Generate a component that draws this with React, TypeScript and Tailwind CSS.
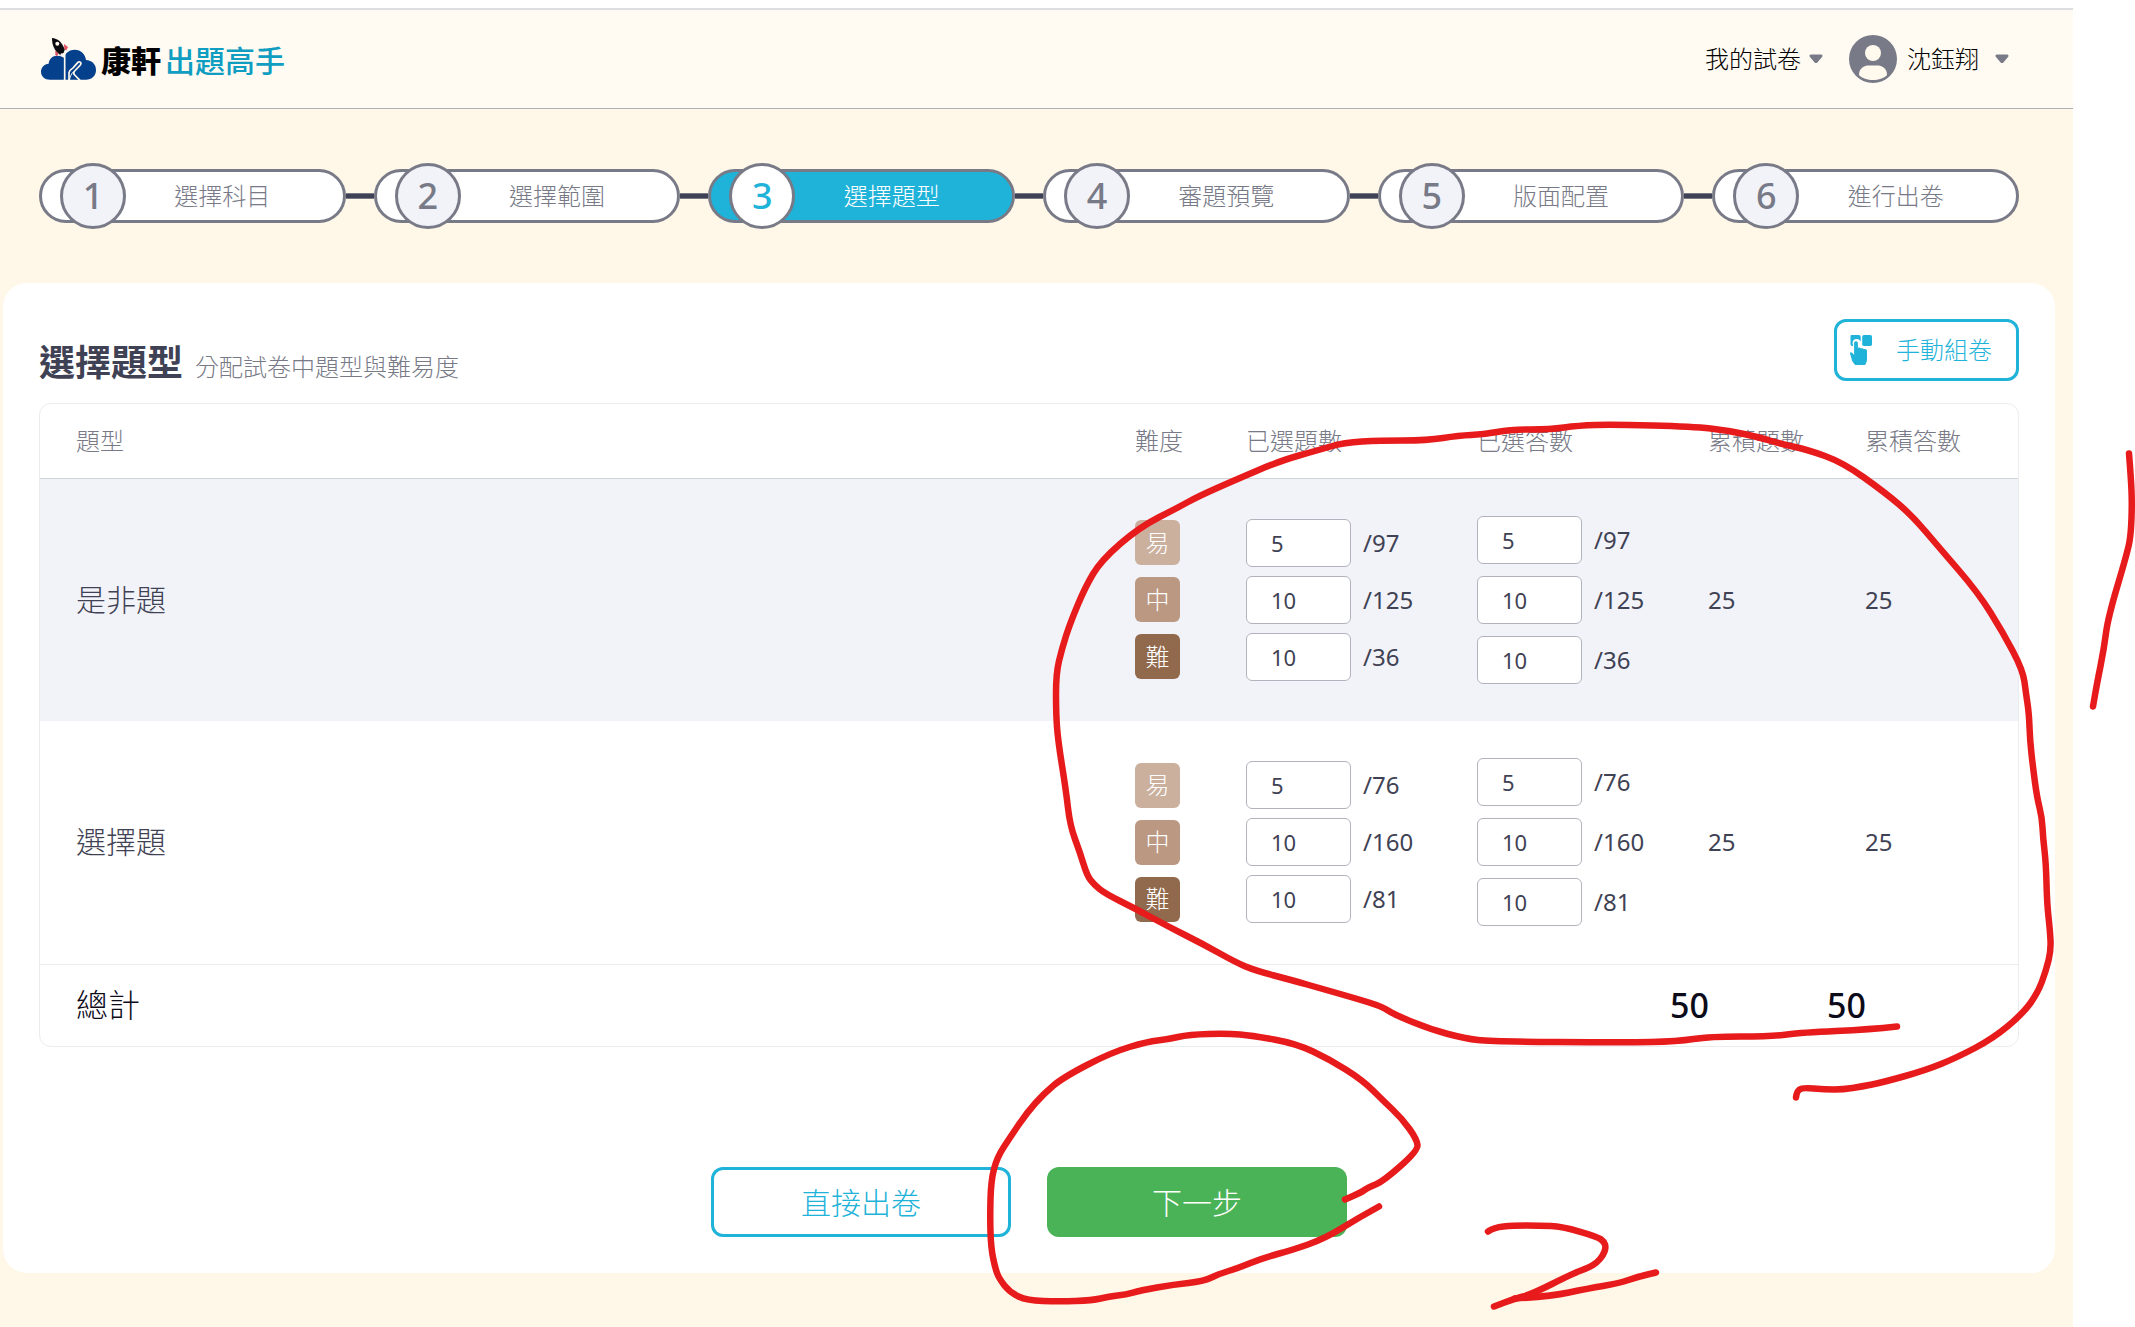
import React, { useState } from "react";

type Level = { label: string; tone: string; chosen: number; total: number };
type QuestionType = { name: string; shaded: boolean; levels: Level[]; questions: number; answers: number };

const EASY = "bg-[#cbb09e]";
const MEDIUM = "bg-[#bb9881]";
const HARD = "bg-[#91694d]";

const STEPS = ["選擇科目", "選擇範圍", "選擇題型", "審題預覽", "版面配置", "進行出卷"];
const CURRENT_STEP = 3;

const ROWS: QuestionType[] = [
  {
    name: "是非題",
    shaded: true,
    levels: [
      { label: "易", tone: EASY, chosen: 5, total: 97 },
      { label: "中", tone: MEDIUM, chosen: 10, total: 125 },
      { label: "難", tone: HARD, chosen: 10, total: 36 },
    ],
    questions: 25,
    answers: 25,
  },
  {
    name: "選擇題",
    shaded: false,
    levels: [
      { label: "易", tone: EASY, chosen: 5, total: 76 },
      { label: "中", tone: MEDIUM, chosen: 10, total: 160 },
      { label: "難", tone: HARD, chosen: 10, total: 81 },
    ],
    questions: 25,
    answers: 25,
  },
];

function LogoMark() {
  return (
    <svg viewBox="30 30 171 132" className="h-11 w-[57px]" aria-hidden="true">
      <path
        d="M60 158 C44 158 33 148 33 134 C33 121 43 111 56 110 C57 96 67 86 82 86 C90 86 96 88 101 92 C107 77 118 68 134 68 C153 68 166 81 168 99 C186 100 198 112 198 129 C198 147 185 158 168 158 Z"
        fill="#04408c"
      />
      <path d="M104 78 V160" stroke="#fff8ec" strokeWidth="5" />
      <path
        d="M117 160 V137 C118 129 124 126 130 122 L143 107 C148 101 156 107 151 114 L134 132 C130 136 130 140 134 144 L150 160"
        fill="none"
        stroke="#fff8ec"
        strokeWidth="5"
      />
      <path d="M118 160 C120 150 123 141 131 134" fill="none" stroke="#fff8ec" strokeWidth="3" />
      <path d="M102 51 L114 60 L109 70 L103 68 Z" fill="#e25262" />
      <path d="M76 70 L86 80 L80 88 L76 84 Z" fill="#e25262" />
      <path d="M66 33 C82 34 97 45 104 68 L101 77 L88 81 C74 72 66 55 66 33 Z" fill="#0c0c10" />
      <circle cx="82" cy="50" r="6" fill="#fff8ec" />
      <path d="M85 70 L90 86 L94 76 L99 80 L98 70 Z" fill="#0c0c10" />
    </svg>
  );
}

function Caret() {
  return (
    <svg viewBox="0 0 14 10" className="h-[10px] w-[14px]" aria-hidden="true">
      <path d="M2 0.5 H12 C13.6 0.5 14 2 13 3 L8.4 8.4 C7.6 9.3 6.4 9.3 5.6 8.4 L1 3 C0 2 0.4 0.5 2 0.5 Z" fill="#787a87" />
    </svg>
  );
}

function Avatar() {
  return (
    <svg viewBox="0 0 48 48" className="size-12" aria-hidden="true">
      <circle cx="24" cy="24" r="24" fill="#787a87" />
      <circle cx="24" cy="18" r="8" fill="#fff9ee" />
      <path d="M10 40 C10 33 15 30.500 20 30.500 H28 C33 30.500 38 33 38 40 C35 43.500 29.500 45 24 45 C18.500 45 13 43.500 10 40 Z" fill="#fff9ee" />
    </svg>
  );
}

function TapIcon() {
  return (
    <svg viewBox="0 0 22 30" className="h-[30px] w-[22px]" aria-hidden="true" fill="#1fb3d9">
      <path d="M1.500 0 H9 Q10.700 0 10.700 1.700 V6.500 C9.500 4.300 7.500 3.800 6 3.900 C3.500 4.200 2.400 6 2.600 8.500 L3.200 11 H2.200 Q0.500 11 0.500 9.300 V1.200 Q0.500 0 1.500 0 Z" />
      <rect x="12.200" y="0" width="9.800" height="11" rx="1.800" />
      <path d="M6 6.200 C7.200 6.200 7.900 7 7.900 8.200 V13 C9 12.200 10.400 12.600 10.900 13.600 C12 13 13.300 13.300 13.800 14.200 C15.600 13.600 17 14.500 17 16 V24 C17 27 15.800 28.200 15.200 30 H5 C4.500 28.500 3 28 2 25.500 L0.300 19.500 C-0.300 17.800 0.200 17 1 17.200 C2.500 17.500 3.400 19 4.100 20 V8.200 C4.100 7 4.800 6.200 6 6.200 Z" />
    </svg>
  );
}

function Step({ index, label }: { index: number; label: string }) {
  const active = index === CURRENT_STEP;
  return (
    <li
      aria-current={active ? "step" : undefined}
      className={
        "flex h-[54px] flex-1 items-center rounded-full border-3 border-[#787a87] pl-[18px] " +
        (active ? "bg-[#1fb3d9]" : "bg-white")
      }
    >
      <span
        className={
          "flex size-[66px] shrink-0 items-center justify-center rounded-full border-3 border-[#787a87] text-[36px] leading-none font-medium " +
          (active ? "bg-white text-[#1fb3d9]" : "bg-[#f2f3f8] text-[#787a87]")
        }
      >
        {index}
      </span>
      <span className={"flex-1 pr-6 text-center text-2xl font-light " + (active ? "text-white" : "text-[#787a87]")}>{label}</span>
    </li>
  );
}

function CountField({ name, level }: { name: string; level: Level }) {
  const [value, setValue] = useState(String(level.chosen));
  return (
    <label className="flex items-center gap-3 text-2xl">
      <input
        type="text"
        inputMode="numeric"
        aria-label={name}
        value={value}
        onChange={(e) => setValue(e.target.value)}
        className="h-12 w-[105px] rounded-md border border-[#b3b3bf] bg-white px-6 text-[22px] text-[#3f4254]"
      />
      <span>/{level.total}</span>
    </label>
  );
}

const PEN_STROKES = [
  "1897,1026 1870,1029 1802,1032 1772,1036 1710,1036 1677,1041 1625,1042 1491,1041 1465,1038 1431,1029 1394,1014 1382,1006 1356,998 1321,988 1293,980 1255,970 1236,962 1202,943 1170,927 1135,908 1105,893 1094,884 1087,875 1080,852 1070,825 1066,790 1058,740 1056,713 1056,673 1062,648 1070,623 1085,587 1101,560 1139,527 1178,507 1198,496 1234,480 1281,460 1317,450 1344,442 1380,440 1427,440 1459,435 1483,434 1511,429 1550,429 1578,425 1613,424 1693,426 1728,430 1760,437 1783,444 1807,449 1843,462 1885,492 1912,515 1940,548 1978,592 2003,632 2023,670 2026,693 2029,713 2030,740 2033,767 2037,797 2042,817 2043,837 2046,863 2047,903 2050,930 2051,950 2046,970 2038,992 2023,1013 1993,1038 1957,1057 1925,1070 1882,1082 1862,1086 1843,1089 1825,1089 1802,1087 1797,1091 1796,1097",
  "1379,1206 1359,1217 1325,1238 1291,1250 1264,1257 1237,1268 1220,1273 1203,1281 1174,1284 1140,1290 1126,1294 1109,1296 1092,1300 1059,1301 1027,1300 1010,1292 999,1278 995,1267 991,1247 990,1217 991,1180 997,1157 1010,1137 1027,1112 1044,1093 1063,1077 1111,1052 1148,1041 1167,1039 1189,1034 1228,1033 1252,1035 1296,1043 1330,1059 1363,1080 1383,1100 1402,1118 1417,1139 1418,1150 1383,1181 1368,1187 1361,1192 1345,1199",
  "2129,453 2131,478 2132,503 2131,532 2128,550 2108,617 2104,648 2097,683 2093,706",
  "1488,1231 1494,1227 1513,1225 1540,1225 1562,1226 1597,1236 1604,1241 1606,1247 1603,1255 1597,1262 1589,1267 1573,1273 1531,1294 1515,1298 1494,1306",
  "1515,1298 1550,1296 1588,1288 1618,1283 1639,1276 1656,1272",
];

/* Turns a list of pen positions into a curve running through the segment midpoints. */
function smooth(stroke: string) {
  const pts = stroke.split(" ").map((p) => p.split(",").map(Number));
  let d = `M${pts[0][0]} ${pts[0][1]}`;
  for (let i = 1; i < pts.length - 1; i++) {
    const [x, y] = pts[i];
    const [nx, ny] = pts[i + 1];
    d += ` Q${x} ${y} ${(x + nx) / 2} ${(y + ny) / 2}`;
  }
  const [lx, ly] = pts[pts.length - 1];
  return `${d} L${lx} ${ly}`;
}

function PenMarks() {
  return (
    <svg
      viewBox="0 0 2135 1327"
      className="pointer-events-none absolute inset-0 h-full w-full"
      fill="none"
      stroke="#e71b1b"
      strokeWidth="6.5"
      strokeLinecap="round"
      strokeLinejoin="round"
      aria-hidden="true"
    >
      {PEN_STROKES.map((s) => (
        <path key={s} d={smooth(s)} />
      ))}
    </svg>
  );
}

export default function App() {
  return (
    <div
      lang="zh-Hant"
      className="relative min-h-screen bg-white pt-2 pr-[62px] font-['Noto_Sans','Noto_Sans_CJK_TC',sans-serif] text-[#3f4254]"
    >
      <div className="bg-[#fff7e7] pb-[55px]">
        <header className="flex h-[101px] items-center justify-between border-t-2 border-b border-t-[#dcdde0] border-b-[#a9aeb9] bg-[#fffaf2] pr-16 pl-10">
          <a href="#home" className="flex items-center gap-1">
            <LogoMark />
            <span className="flex items-center gap-1 pt-1 text-[30px] leading-none">
              <span className="font-black text-black">康軒</span>
              <span className="font-medium text-[#0f9dc1]">出題高手</span>
            </span>
          </a>
          <nav className="flex items-center text-2xl font-light text-black">
            <button type="button" className="flex items-center gap-2">
              我的試卷
              <Caret />
            </button>
            <button type="button" className="ml-[26px] flex items-center">
              <Avatar />
              <span className="ml-[10px]">沈鈺翔</span>
              <span className="ml-4">
                <Caret />
              </span>
            </button>
          </nav>
        </header>

        <ol className="flex h-[174px] items-center pr-[54px] pl-[39px]">
          {STEPS.map((label, i) => (
            <React.Fragment key={label}>
              {i > 0 && <li role="presentation" className="h-[6px] w-7 border-t border-b border-[#787a87] bg-[#3f4254]" />}
              <Step index={i + 1} label={label} />
            </React.Fragment>
          ))}
        </ol>

        <main className="mr-[18px] ml-[3px] rounded-3xl bg-white p-9">
          <div className="flex items-end justify-between">
            <div className="flex items-baseline gap-3">
              <h1 className="text-[36px] leading-9 font-bold">選擇題型</h1>
              <p className="text-2xl leading-6 font-light text-[#787a87]">分配試卷中題型與難易度</p>
            </div>
            <button
              type="button"
              className="flex h-[62px] items-center gap-6 rounded-xl border-3 border-[#1fb3d9] pr-6 pl-[13px] text-2xl font-light text-[#1fb3d9]"
            >
              <TapIcon />
              手動組卷
            </button>
          </div>

          <div className="mt-[22px] overflow-hidden rounded-xl border border-[#ebecee]">
            <table className="w-full table-fixed text-left text-2xl">
              <colgroup>
                <col />
                <col className="w-[111px]" />
                <col className="w-[231px]" />
                <col className="w-[231px]" />
                <col className="w-[157px]" />
                <col className="w-[191px]" />
              </colgroup>
              <thead>
                <tr className="h-[74px] border-b border-[#d0d3da] text-[#787a87]">
                  {["題型", "難度", "已選題數", "已選答數", "累積題數", "累積答數"].map((h) => (
                    <th key={h} scope="col" className="pl-[38px] font-light whitespace-nowrap first:pl-9">
                      {h}
                    </th>
                  ))}
                </tr>
              </thead>
              <tbody>
                {ROWS.map((row) => (
                  <tr key={row.name} className={"h-[243px] " + (row.shaded ? "bg-[#f2f3f8]" : "bg-white")}>
                    <th scope="row" className="pl-9 text-[30px] font-light">
                      {row.name}
                    </th>
                    <td className="pl-[38px]">
                      <div className="flex flex-col gap-3">
                        {row.levels.map((l) => (
                          <span
                            key={l.label}
                            className={"flex size-[45px] items-center justify-center rounded-md text-2xl font-light text-white " + l.tone}
                          >
                            {l.label}
                          </span>
                        ))}
                      </div>
                    </td>
                    <td className="pl-[38px]">
                      <div className="flex flex-col gap-[9px]">
                        {row.levels.map((l) => (
                          <CountField key={l.label} name={row.name + l.label + "已選題數"} level={l} />
                        ))}
                      </div>
                    </td>
                    <td className="pl-[38px]">
                      <div className="flex flex-col gap-3">
                        {row.levels.map((l) => (
                          <CountField key={l.label} name={row.name + l.label + "已選答數"} level={l} />
                        ))}
                      </div>
                    </td>
                    <td className="pl-[38px]">{row.questions}</td>
                    <td className="pl-[38px]">{row.answers}</td>
                  </tr>
                ))}
              </tbody>
              <tfoot>
                <tr className="h-[82px] border-t border-[#ebecee] text-[34px] text-[#0b0b1a]">
                  <th scope="row" colSpan={4} className="pl-9 text-[32px] font-light">
                    總計
                  </th>
                  <td className="font-medium">50</td>
                  <td className="font-medium">50</td>
                </tr>
              </tfoot>
            </table>
          </div>

          <div className="mt-[120px] flex justify-center gap-9 text-[30px] font-light">
            <button type="button" className="h-[70px] w-[300px] rounded-xl border-3 border-[#1fb3d9] bg-white text-[#1fb3d9]">
              直接出卷
            </button>
            <button type="button" className="h-[70px] w-[300px] rounded-xl bg-[#4bb357] text-white">
              下一步
            </button>
          </div>
        </main>
      </div>
      <PenMarks />
    </div>
  );
}
